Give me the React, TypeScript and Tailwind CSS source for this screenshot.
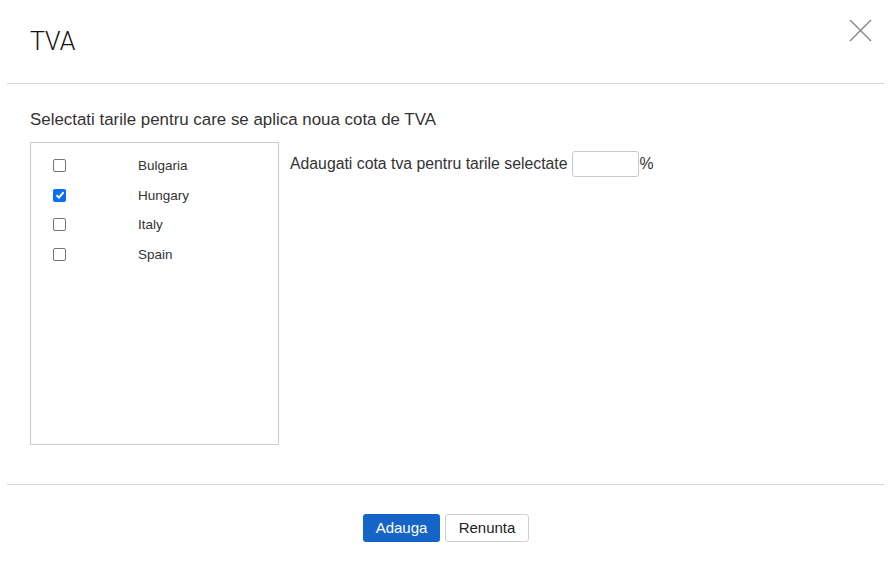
import React from "react";

export default function App() {
  const countries = [
    { name: "Bulgaria", checked: false },
    { name: "Hungary", checked: true },
    { name: "Italy", checked: false },
    { name: "Spain", checked: false },
  ];
  return (
    <div className="w-[888px] h-[575px] bg-white text-[#333] relative" style={{ fontFamily: '"Liberation Sans", Arial, sans-serif' }}>
      <div className="h-[84px] ml-[7px] w-[877px] border-b border-[#d4d4d8] flex items-start">
        <h1 className="mt-[26px] ml-[23px] text-[25px] leading-[32px] font-light text-[#111]" style={{ fontFamily: 'Roboto, "Open Sans", sans-serif' }}>TVA</h1>
        <button className="ml-auto mt-[18px] mr-[12px] w-[24px] h-[24px] flex items-center justify-center">
          <svg width="23" height="23" viewBox="0 0 23 23" fill="none" stroke="#8a8a8a" strokeWidth="1.5">
            <path d="M1 1L22 22M22 1L1 22" />
          </svg>
        </button>
      </div>
      <div className="px-[30px] pt-[26px]">
        <div className="text-[16.9px] leading-[20px] whitespace-nowrap">Selectati tarile pentru care se aplica noua cota de TVA</div>
        <div className="flex mt-[12px]">
          <div className="w-[249px] h-[303px] border border-[#cccccc] pt-[8px]">
            {countries.map((c) => (
              <div key={c.name} className="flex items-center h-[29.5px]">
                <div className="w-[13px] ml-[22px] flex items-center">
                  {c.checked ? (
                    <div className="w-[13px] h-[13px] rounded-[2px] bg-[#0b6ff2] flex items-center justify-center">
                      <svg width="10" height="10" viewBox="0 0 10 10" fill="none" stroke="white" strokeWidth="2">
                        <path d="M1.5 5.2L4 7.6L8.6 2.2" />
                      </svg>
                    </div>
                  ) : (
                    <div className="w-[13px] h-[13px] rounded-[2px] border border-[#767676] bg-white" />
                  )}
                </div>
                <span className="ml-[72px] text-[13.5px] leading-[17px]">{c.name}</span>
              </div>
            ))}
          </div>
          <div className="ml-[11px] mt-[9px] flex items-center h-[26px]">
            <span className="text-[15.8px] whitespace-nowrap">Adaugati cota tva pentru tarile selectate</span>
            <input className="ml-[4px] w-[67px] h-[26px] border border-[#c8c8c8] rounded-[3px] outline-none" />
            <span className="ml-[1px] text-[15.8px]">%</span>
          </div>
        </div>
      </div>
      <div className="ml-[7px] w-[877px] mt-[39px] border-t border-[#d4d4d8]" />
      <div className="flex justify-center gap-[5px] mt-[29px] ml-[4px]">
        <button className="w-[77px] h-[28px] rounded-[3px] bg-[#1565c8] text-white text-[15px]">Adauga</button>
        <button className="w-[84px] h-[28px] rounded-[3px] border border-[#d0d0d0] bg-white text-[#222] text-[15px]">Renunta</button>
      </div>
    </div>
  );
}
